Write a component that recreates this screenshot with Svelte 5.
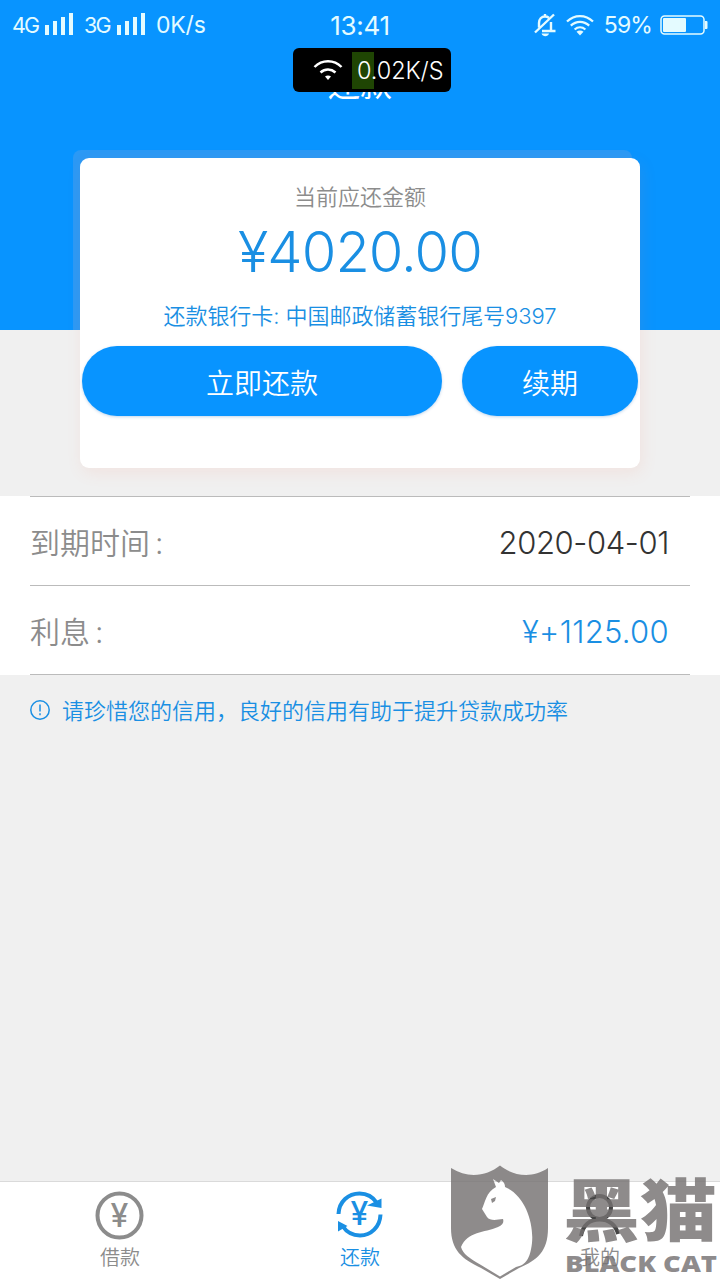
<script lang="ts">
  const details = [
    { label: '到期时间', value: '2020-04-01', accent: false },
    { label: '利息', value: '¥+1125.00', accent: true },
  ];

  const networks = ['4G', '3G'];

  const tabs = [
    { id: 'borrow', label: '借款' },
    { id: 'repay', label: '还款' },
    { id: 'mine', label: '我的' },
  ];

  let active = $state('repay');
</script>

<div class="page">
  <header class="header">
    <div class="status-bar">
      <div class="status-left">
        {#each networks as network (network)}
          <span class="network">{network}</span>
          <svg class="signal" width="29" height="22" viewBox="0 0 29 22" fill="currentColor">
            <rect x="0" y="12" width="4" height="10" />
            <rect x="8" y="8" width="4" height="14" />
            <rect x="16" y="4" width="4" height="18" />
            <rect x="24" y="0" width="4" height="22" />
          </svg>
        {/each}
        <span class="rate">0K/s</span>
      </div>
      <span class="clock">13:41</span>
      <div class="status-right">
        <svg width="22" height="24" viewBox="0 0 22 24" fill="none" stroke="currentColor" stroke-width="2.400">
          <path d="M5 14.500V10C5 6 7.500 3.500 11 3.500c1.500 0 2.800.4 3.800 1.200M17 9V17.500M21.500 18H8M11 1v2.500M1 19.500L20 1.500" />
          <path d="M7.500 20.500h7.500c-.5 1.800-2 2.700-3.700 2.700s-3.200-.9-3.800-2.700z" fill="currentColor" stroke="none" />
        </svg>
        <svg class="wifi" width="28" height="21" viewBox="0 0 28 21" fill="none" stroke="currentColor" stroke-width="2.200">
          <path d="M1 6.500C8.500-.8 19.500-.8 27 6.500M4.800 10.600C10.200 5.500 17.800 5.500 23.200 10.600M8.600 14.500C11.800 11.600 16.200 11.600 19.400 14.500" />
          <path d="M14 20.500l-3.500-3.800c2-1.700 5-1.700 7 0z" fill="currentColor" stroke="none" />
        </svg>
        <span class="percent">59%</span>
        <svg width="48" height="20" viewBox="0 0 48 20">
          <rect x="1" y="1" width="43" height="18" rx="3.500" fill="none" stroke="currentColor" stroke-width="1.500" />
          <rect x="3" y="3" width="23" height="14" rx="1" fill="currentColor" />
          <path d="M45 6h1.500q1 0 1 1v6q0 1-1 1H45z" fill="currentColor" />
        </svg>
      </div>
    </div>
    <h1 class="title">还款</h1>
    <div class="card-glow"></div>
  </header>

  <div class="speed-badge">
    <svg width="30" height="22" viewBox="0 0 30 22" fill="none" stroke="currentColor" stroke-width="2.500">
      <path d="M1.500 8C9 .2 21 .2 28.500 8M7.500 13.500C12 9.500 18 9.500 22.500 13.500" />
      <path d="M15 21l-3-3.500c1.800-1.300 4.200-1.300 6 0z" fill="currentColor" stroke="none" />
    </svg>
    <span class="speed">0.02K/S</span>
  </div>

  <section class="card">
    <p class="card-label">当前应还金额</p>
    <p class="amount">¥4020.00</p>
    <p class="bank">还款银行卡: 中国邮政储蓄银行尾号9397</p>
    <div class="actions">
      <button class="btn btn-repay">立即还款</button>
      <button class="btn btn-renew">续期</button>
    </div>
  </section>

  <section class="details">
    {#each details as item (item.label)}
      <div class="row">
        <span class="row-label">{item.label}<i>:</i></span>
        <span class="row-value" class:accent={item.accent}>{item.value}</span>
      </div>
    {/each}
  </section>

  <p class="notice">
    <svg width="20" height="20" viewBox="0 0 20 20" fill="none" stroke="currentColor" stroke-width="1.500">
      <circle cx="10" cy="10" r="9.200" />
      <path d="M10 4.500v7M10 13.300v2" />
    </svg>
    <span>请珍惜您的信用，良好的信用有助于提升贷款成功率</span>
  </p>

  <nav class="tabs">
    {#each tabs as tab (tab.id)}
      <button class="tab" class:active={active === tab.id} onclick={() => (active = tab.id)}>
        <svg class={tab.id} width="50" height="50" viewBox="0 0 50 50" fill="none" stroke="currentColor" stroke-width="4">
          {#if tab.id === 'borrow'}
            <circle cx="24.500" cy="25.500" r="22" />
            <text class="yen" x="24.500" y="36.500" text-anchor="middle">¥</text>
          {:else if tab.id === 'repay'}
            <path d="M3.500 24C4 11.500 13.500 3.500 24.500 3.500c7.500 0 13.500 3.500 17.500 9.500M45.500 24.500C45 37 36 45.500 25 45.500c-7 0-13.500-3.500-17.500-9.500" />
            <path d="M46.500 8.500V18L32 15.500zM3 31v10.500L12.500 36z" fill="currentColor" stroke="none" />
            <text class="yen" x="24.500" y="35" text-anchor="middle">¥</text>
          {:else}
            <circle cx="24.500" cy="17.500" r="11.500" />
            <path d="M6 46C8 35 15 29.500 24.500 29.500S41 35 43 44" />
          {/if}
        </svg>
        <span>{tab.label}</span>
      </button>
    {/each}
  </nav>

  <div class="watermark">
    <svg width="270" height="119" viewBox="0 0 270 119" fill="currentColor">
      <path
        fill-rule="evenodd"
        d="M1 7C18 18 37 15 50 4.500C63 15 82 18 98 7V67C98 91 87 99 69 107L50 118L31 107C12 98 1 89 1 67Z
           M43 18L49 22L51 19C54 21 55 23 55 26C75 34 84 62 82 82C80 98 76 104 66 106L50 115.500L31 104C19 97 13 93 11 86C18 70 34 72 48 66C53 64 54 61 53 58C46 59 40 60 37 56L32 48C35 42 36 31 46 26Z"
      />
      <path d="M41 38l5-2-1 4-3 2z" />
      <text class="mark-cn" x="113" y="75" textLength="154" lengthAdjust="spacingAndGlyphs">黑猫</text>
      <text class="mark-en" x="115" y="111" textLength="152" lengthAdjust="spacingAndGlyphs">BLACK CAT</text>
    </svg>
  </div>
</div>

<style>
  :global(body) {
    margin: 0;
  }

  .page {
    --blue: #0894ff;
    --text-blue: #1a8fe3;
    --gray: #8c8c8c;
    position: relative;
    display: flex;
    flex-direction: column;
    width: 720px;
    height: 1280px;
    overflow: hidden;
    background: #f0f0f0;
    font-family: Inter, 'Noto Sans CJK SC', sans-serif;
    font-weight: 350;
  }

  p, h1 {
    margin: 0;
    font-weight: inherit;
  }

  svg {
    display: block;
    flex: none;
    overflow: visible;
  }

  button {
    padding: 0;
    border: 0;
    font: inherit;
    color: inherit;
  }

  .header {
    position: relative;
    flex: none;
    height: 330px;
    overflow: hidden;
    background: var(--blue);
    color: #fff;
  }

  .status-bar {
    display: grid;
    grid-template-columns: 1fr auto 1fr;
    align-items: center;
    height: 50px;
    padding: 0 12px;
    color: #e4fbff;
    font-weight: 400;
  }

  .status-left, .status-right {
    display: flex;
    align-items: center;
  }

  .status-right {
    justify-content: flex-end;
  }

  .network {
    width: 27px;
    font-size: 21.5px;
    letter-spacing: -1.8px;
    white-space: nowrap;
  }

  .signal {
    margin: 0 10px 3px 6px;
  }

  .rate {
    font-size: 23px;
    letter-spacing: -0.2px;
  }

  .clock {
    font-size: 26px;
    letter-spacing: -0.3px;
  }

  .wifi { margin: 0 10px 0 10px; }

  .percent {
    margin-right: 8px;
    font-size: 23px;
    letter-spacing: -0.9px;
  }

  .title {
    padding-top: 12px;
    font-size: 32px;
    font-weight: 400;
    line-height: 46px;
    text-align: center;
  }

  .card-glow {
    position: absolute;
    top: 150px;
    left: 73px;
    width: 559px;
    height: 200px;
    border-radius: 8px;
    background: #2b99f5;
  }

  .speed-badge {
    position: absolute;
    top: 48px;
    left: 293px;
    display: flex;
    align-items: center;
    box-sizing: border-box;
    width: 158px;
    height: 44px;
    padding-left: 20px;
    border-radius: 6px;
    background: #000;
    color: #fff;
  }

  .speed {
    margin-left: 9px;
    padding-left: 5px;
    background: linear-gradient(#1f4503, #1f4503) no-repeat 0 0 / 22px 100%;
    font-size: 23.5px;
    letter-spacing: -0.1px;
    line-height: 37px;
  }

  .card {
    position: relative;
    flex: none;
    box-sizing: border-box;
    width: 560px;
    height: 310px;
    margin: -172px 0 28px 80px;
    padding: 23px 2px 0;
    border-radius: 9px;
    background: #fff;
    box-shadow: 2px 5px 16px rgba(255, 120, 90, 0.1);
    text-align: center;
  }

  .card-label {
    color: var(--gray);
    font-size: 22px;
    line-height: 32px;
  }

  .amount {
    color: var(--text-blue);
    font-size: 56px;
    letter-spacing: -0.9px;
    line-height: 78px;
  }

  .bank {
    padding-top: 9px;
    color: var(--text-blue);
    font-size: 22px;
    letter-spacing: -0.05px;
    line-height: 32px;
  }

  .actions {
    display: flex;
    gap: 20px;
    margin-top: 14px;
  }

  .btn {
    height: 70px;
    padding-top: 2px;
    border-radius: 35px;
    background: var(--blue);
    box-shadow: 0 1px 3px rgba(0, 90, 180, 0.25);
    color: #fff;
    font-size: 28px;
  }

  .btn-repay { width: 360px; }
  .btn-renew { width: 176px; }

  .details {
    flex: none;
    padding: 0 30px;
    background: #fff;
  }

  .row {
    display: flex;
    align-items: center;
    justify-content: space-between;
    height: 88px;
    padding-right: 21px;
    border-bottom: 1px solid #bbb;
  }

  .row:first-child {
    border-top: 1px solid #bbb;
  }

  .row-label {
    color: var(--gray);
    font-size: 30px;
  }

  .row-label i {
    margin-left: 5px;
    font-style: normal;
  }

  .row-value {
    padding-top: 3px;
    color: #333;
    font-size: 31px;
    letter-spacing: -0.4px;
  }

  .row-value.accent {
    color: var(--text-blue);
    letter-spacing: 0.3px;
  }

  .notice {
    display: flex;
    align-items: center;
    gap: 12px;
    padding: 20px 30px 0;
    color: var(--text-blue);
    font-size: 22px;
    line-height: 32px;
  }

  .notice svg {
    margin-bottom: 2px;
  }

  .tabs {
    display: flex;
    flex: none;
    height: 98px;
    margin-top: auto;
    border-top: 1px solid #dadada;
    background: #fff;
  }

  .tab {
    display: flex;
    flex: 1;
    flex-direction: column;
    align-items: center;
    padding-top: 8px;
    background: none;
    color: var(--gray);
    font-size: 20px;
    line-height: 30px;
  }

  .tab span { padding-top: 3px; }
  .tab.active { color: var(--text-blue); }
  .mine { color: #444; }

  .yen {
    fill: currentColor;
    stroke: none;
    font-size: 32px;
    font-weight: 500;
  }

  .watermark {
    position: absolute;
    top: 1161px;
    left: 450px;
    color: rgba(117, 113, 114, 0.82);
    pointer-events: none;
  }

  .mark-cn {
    font-family: 'Noto Sans CJK SC', sans-serif;
    font-size: 68px;
    font-weight: 900;
  }

  .mark-en {
    font-family: 'Open Sans', sans-serif;
    font-size: 23px;
    font-weight: 800;
  }
</style>
